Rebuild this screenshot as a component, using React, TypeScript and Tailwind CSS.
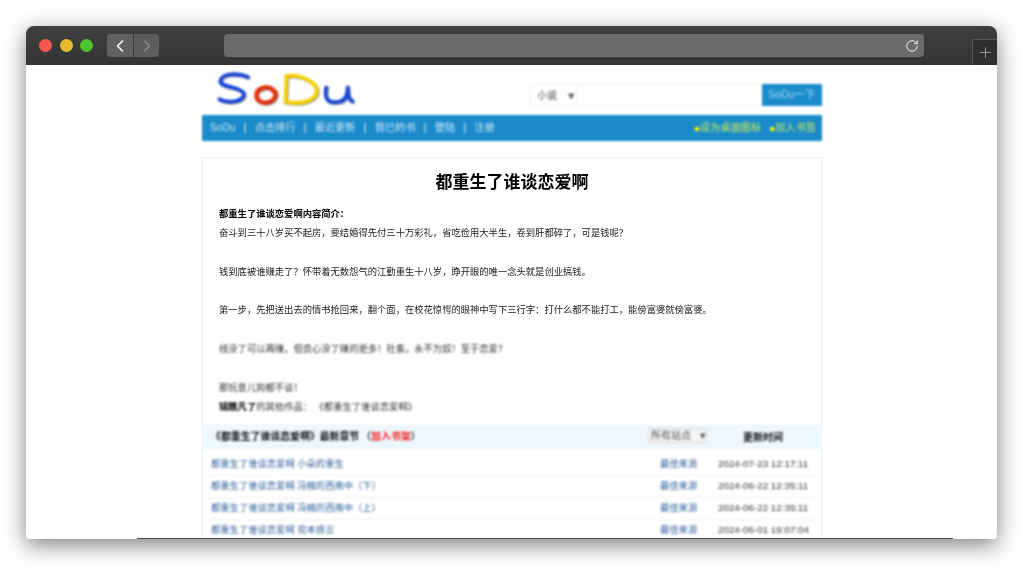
import React from 'react';
import { ChevronLeft, ChevronRight, Plus, RotateCw } from 'lucide-react';

const intro = [
  '奋斗到三十八岁买不起房，要结婚得先付三十万彩礼，省吃俭用大半生，卷到肝都碎了，可是钱呢？',
  '',
  '钱到底被谁赚走了？怀带着无数怨气的江勤重生十八岁，睁开眼的唯一念头就是创业搞钱。',
  '',
  '第一步，先把送出去的情书抢回来，翻个面，在校花惊愕的眼神中写下三行字：打什么都不能打工，能傍富婆就傍富婆。',
];

const chapters = [
  { name: '都重生了谁谈恋爱啊 小朵的重生', date: '2024-07-23 12:17:11' },
  { name: '都重生了谁谈恋爱啊 冯楠的西南中（下）', date: '2024-06-22 12:35:11' },
  { name: '都重生了谁谈恋爱啊 冯楠的西南中（上）', date: '2024-06-22 12:35:11' },
  { name: '都重生了谁谈恋爱啊 完本感言', date: '2024-06-01 19:07:04' },
];

const navLinks = ['SoDu', '点击排行', '最近更新', '我已的书', '登陆', '注册'];

const Logo = () => (
  <svg width="137" height="35" viewBox="0 0 140 36" fill="none" strokeLinecap="round" className="drop-shadow-[1px_1px_0.5px_rgba(0,0,0,0.4)]">
    <path d="M31 5 C22 1 5 1 3 9 C2 16 24 15 27 22 C29 30 12 33 2 28" stroke="#1746d6" strokeWidth="4" />
    <path d="M57 18 C50 13 40 17 40 24 C40 32 52 34 58 28 C61 24 60 20 57 19" stroke="#e0330c" strokeWidth="4.6" />
    <path d="M71 5 L70 31" stroke="#f7d200" strokeWidth="4" />
    <path d="M71 4 C88 2 104 12 102 21 C100 30 86 33 73 31" stroke="#f7d200" strokeWidth="4" />
    <path d="M112 16 C110 25 112 32 122 31 C130 31 134 26 134 16 M134 17 C134 24 135 29 139 30" stroke="#1746d6" strokeWidth="4" />
  </svg>
);

const Toolbar = () => (
  <div className="relative flex h-[39px] items-start bg-gradient-to-b from-[#3f3f3f] to-[#343434] pl-[13px] pt-[8px]">
    <div className="mt-[5px] flex gap-[7.5px]">
      <span className="h-[13px] w-[13px] rounded-full bg-[#f85650]" />
      <span className="h-[13px] w-[13px] rounded-full bg-[#e8bd2b]" />
      <span className="h-[13px] w-[13px] rounded-full bg-[#4fc22f]" />
    </div>
    <div className="ml-[14px] flex gap-px">
      <span className="flex h-[23px] w-[26px] items-center justify-center rounded-l-[4px] bg-[#616161]">
        <ChevronLeft size={20} strokeWidth={1.8} className="text-white" />
      </span>
      <span className="flex h-[23px] w-[25px] items-center justify-center rounded-r-[4px] bg-[#5c5c5c]">
        <ChevronRight size={20} strokeWidth={1.5} className="text-[#8f8f8f]" />
      </span>
    </div>
    <div className="ml-[65px] flex h-[23px] w-[700px] items-center justify-end rounded-[4px] bg-[#6b6b6b] pr-[5px]">
      <RotateCw size={14} strokeWidth={1.7} className="text-[#eeeeee]" />
    </div>
    <div className="absolute bottom-0 right-0 flex h-[26px] w-[25px] items-center justify-center border-l border-t border-[#555555] bg-[#2f2f2f]">
      <Plus size={17} strokeWidth={1} className="text-[#c4c4c4]" />
    </div>
  </div>
);

const Header = () => (
  <div className="blur-[1px]">
    <div className="flex h-[50px] items-start justify-between">
      <div className="ml-[15px] mt-[7px]">
        <Logo />
      </div>
      <div className="mt-[19px] flex h-[22px] text-[10px]">
        <div className="flex w-[47px] items-center justify-between rounded-l-[3px] border border-[#f0f0f0] pl-[6px] pr-[1px] text-[#444444]">
          <span>小说</span>
          <span className="text-[13px] leading-none text-[#666666]">▾</span>
        </div>
        <div className="w-[185px] border-y border-[#f0f0f0] bg-white" />
        <div className="flex w-[60px] items-center justify-center bg-[#1a8ccc] text-[10.5px] text-[#a9d8f2]">SoDu一下</div>
      </div>
    </div>
    <div className="flex h-[26px] items-center justify-between bg-[#1a8acb] pl-[8px] pr-[6px] text-[10.2px] text-[#cfe8f6]">
      <div className="flex items-center">
        {navLinks.map((link, i) => (
          <React.Fragment key={link}>
            {i > 0 && <span className="mx-[8.3px] text-white">|</span>}
            <span>{link}</span>
          </React.Fragment>
        ))}
      </div>
      <div className="flex items-center gap-[8px] text-[10.2px] text-[#c9ea5a]">
        <span><span className="text-[6px] text-[#f2f200]">◆</span>设为桌面图标</span>
        <span><span className="text-[6px] text-[#f2f200]">◆</span>加入书签</span>
      </div>
    </div>
  </div>
);

const Chapters = () => (
  <div className="blur-[1px]">
    <div className="flex h-[24px] items-center bg-[#edf7fe] pl-[8px] pr-[38px] text-[9.9px] font-bold text-[#111111]">
      <span>《都重生了谁谈恋爱啊》最新章节<span className="ml-[2px] text-[#333333]">（</span><span className="text-[#f01c1c]">加入书架</span><span className="text-[#333333]">）</span></span>
      <span className="ml-auto mr-[36px] -mt-[3px] flex h-[15px] w-[59px] items-center justify-between rounded-[3px] border border-[#d8d8d8] bg-[#f4f4f4] pl-[2px] text-[10px] font-normal text-[#555555]">
        所有站点<span className="text-[11px] leading-none">▾</span>
      </span>
      <span className="text-[10px]">更新时间</span>
    </div>
    <div className="px-[4px] pt-[5px]">
      {chapters.map((c) => (
        <div key={c.name + c.date} className="flex h-[22px] items-center whitespace-nowrap border-b border-[#f2f2f2] pl-[4px] pr-[8px] text-[9.3px]">
          <span className="text-[#30629c]">{c.name}</span>
          <span className="ml-auto w-[38px] text-[#30629c]">最佳来源</span>
          <span className="ml-[20px] w-[91px] text-[9.8px] text-[#3a3a3a]">{c.date}</span>
        </div>
      ))}
    </div>
  </div>
);

const App: React.FC = () => {
  return (
    <div className="h-[566px] w-[1024px] overflow-hidden bg-white pl-[26px] pt-[26px] font-['Liberation_Sans','Noto_Sans_CJK_SC',sans-serif]">
      <div className="flex h-[513px] w-[971px] flex-col overflow-hidden rounded-t-[8px] rounded-b-[3px] bg-white shadow-[0_6px_22px_rgba(0,0,0,0.5)]">
        <Toolbar />
        <div className="h-[473px] overflow-hidden">
          <div className="ml-[176px] w-[620px]">
            <Header />
            <div className="mt-[16px] border-x border-t border-[#e6f2fb]">
              <div className="blur-[0.3px] px-[16px] text-[9.3px] leading-[19.3px] text-[#1a1a1a]">
                <h1 className="pb-[10px] pt-[13px] text-center text-[17px] font-bold leading-[24px] text-black">都重生了谁谈恋爱啊</h1>
                <p className="font-bold text-black">都重生了谁谈恋爱啊内容简介：</p>
                {intro.map((line, i) => (
                  <p key={i} className="h-[19.3px]">{line}</p>
                ))}
              </div>
              <div className="blur-[0.9px] px-[16px] pb-[8px] text-[9.3px] leading-[19.3px] text-[#333333]">
                <p className="h-[19.3px]" />
                <p>线没了可以再赚，但良心没了赚的更多！社畜，永不为奴！至于恋爱？</p>
                <p className="h-[19.3px]" />
                <p>那玩意儿狗都不谈！</p>
                <p><span className="font-bold text-black">锦瞧凡了</span>的其他作品： 《都重生了谁谈恋爱啊》</p>
              </div>
              <Chapters />
            </div>
          </div>
        </div>
        <div className="ml-[111px] mr-[44px] h-px bg-[#4a4a4a]" />
      </div>
    </div>
  );
};

export default App;
